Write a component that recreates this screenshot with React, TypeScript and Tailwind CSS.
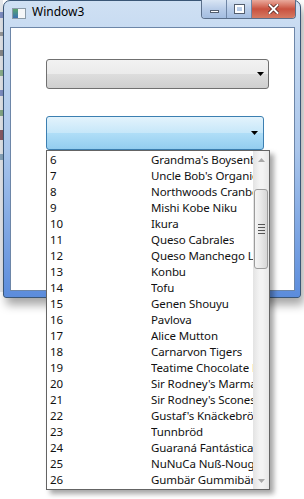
import React from "react";

const items: [number, string][] = [
  [6, "Grandma's Boysenberry Spread"],
  [7, "Uncle Bob's Organic Dried Pears"],
  [8, "Northwoods Cranberry Sauce"],
  [9, "Mishi Kobe Niku"],
  [10, "Ikura"],
  [11, "Queso Cabrales"],
  [12, "Queso Manchego La Pastora"],
  [13, "Konbu"],
  [14, "Tofu"],
  [15, "Genen Shouyu"],
  [16, "Pavlova"],
  [17, "Alice Mutton"],
  [18, "Carnarvon Tigers"],
  [19, "Teatime Chocolate Biscuits"],
  [20, "Sir Rodney's Marmalade"],
  [21, "Sir Rodney's Scones"],
  [22, "Gustaf's Knäckebröd"],
  [23, "Tunnbröd"],
  [24, "Guaraná Fantástica"],
  [25, "NuNuCa Nuß-Nougat-Creme"],
  [26, "Gumbär Gummibärchen"],
];

const Arrow = () => (
  <svg width="7" height="4" viewBox="0 0 7 4">
    <path d="M0 0H7L3.5 4Z" fill="#000" />
  </svg>
);

export default function App() {
  const font = { fontFamily: '"Segoe UI", "Noto Sans", "Open Sans", sans-serif' };
  return (
    <div className="relative w-[304px] h-[499px] bg-white overflow-hidden text-[12px] text-black" style={font}>
      <div className="flex">
        <div className="w-[3px] h-[292px] bg-[#e4e7eb] flex flex-col gap-[14px] pt-[12px] overflow-hidden">
          <div className="h-[6px] bg-[#7f8fc4]" />
          <div className="h-[4px] bg-[#9a9a9a]" />
          <div className="h-[6px] bg-[#8a8a8a]" />
          <div className="h-[6px] bg-[#8db08d]" />
          <div className="h-[6px] bg-[#7f8fc4]" />
          <div className="h-[6px] bg-[#86a886]" />
          <div className="h-[10px] bg-[#8a5a66]" />
          <div className="h-[6px] bg-[#8aa6bd]" />
        </div>
        <div className="w-[298px] h-[298px] rounded-t-[7px] rounded-b-[3px] border border-[#3a5676] bg-gradient-to-b from-[#cfe0f3] via-[#aac6eb] to-[#5b8cdc] shadow-[3px_7px_10px_rgba(0,0,0,0.35)] flex flex-col">
          <div className="h-[26px] flex items-start relative">
            <div className="ml-[8px] mt-[7px] w-[14px] h-[11px] border border-[#8a9aa8] bg-[#f4f6f8] flex">
              <div className="w-[5px] h-full bg-gradient-to-b from-[#5aa36a] to-[#3b6fb0]" />
            </div>
            <div className="ml-[6px] mt-[3px] text-[12px] leading-[16px] text-black">Window3</div>
            <div className="ml-auto mr-[4px] -mt-[1px] flex h-[19px] rounded-b-[4px] border border-[#5b6f8a] border-t-0 overflow-hidden">
              <div className="w-[25px] h-full bg-gradient-to-b from-[#d9e5f4] via-[#b8cce8] to-[#a3bde0] border-r border-[#6e85a5] flex items-center justify-center">
                <div className="w-[9px] h-[3px] mt-[4px] bg-white border border-[#535e6e]" />
              </div>
              <div className="w-[25px] h-full bg-gradient-to-b from-[#d9e5f4] via-[#b8cce8] to-[#a3bde0] border-r border-[#6e85a5] flex items-center justify-center">
                <div className="w-[9px] h-[8px] border-2 border-white outline outline-1 outline-[#535e6e] bg-transparent" />
              </div>
              <div className="w-[43px] h-full bg-gradient-to-b from-[#e9a99c] via-[#c9513f] to-[#d57a62] flex items-center justify-center">
                <svg width="11" height="10" viewBox="0 0 11 10">
                  <path d="M1.5 1L9.5 9M9.5 1L1.5 9" stroke="#4a1a14" strokeWidth="3.4" strokeLinecap="square" />
                  <path d="M1.5 1L9.5 9M9.5 1L1.5 9" stroke="#ffffff" strokeWidth="2" strokeLinecap="square" />
                </svg>
              </div>
            </div>
          </div>
          <div className="ml-[6px] mr-[5px] mb-[6px] flex-1 bg-white border border-[#6d86a8] flex flex-col">
            <div className="ml-[35px] mt-[31px] w-[223px] h-[30px] rounded-[3px] border border-[#707070] bg-[linear-gradient(to_bottom,#f2f2f2_0%,#ebebeb_50%,#dddddd_50%,#cfcfcf_100%)] flex items-center justify-end pr-[4px]">
              <Arrow />
            </div>
            <div className="ml-[35px] mt-[27px] w-[218px] h-[34px] rounded-[3px] border border-[#3c7fb1] bg-[linear-gradient(to_bottom,#e3f3fc_0%,#c6e7f9_50%,#b0def7_50%,#93cdef_100%)] flex items-center justify-end pr-[5px]">
              <Arrow />
            </div>
          </div>
        </div>
      </div>

      <div className="absolute left-[46px] top-[150px] w-[224px] h-[340px] bg-white border border-[#646464] shadow-[4px_4px_5px_rgba(0,0,0,0.35)] flex">
        <div className="flex-1 flex flex-col pt-[1px] overflow-hidden text-[11.5px] tracking-[-0.1px] text-[#111]">
          {items.map(([n, name]) => (
            <div key={n} className="h-[16px] flex items-center leading-[16px] whitespace-nowrap">
              <div className="w-[104px] pl-[3px] shrink-0">{n}</div>
              <div className="overflow-hidden">{name}</div>
            </div>
          ))}
        </div>
        <div className="w-[16px] h-full bg-[linear-gradient(to_right,#e3e3e3,#f3f3f3_40%,#f3f3f3_60%,#e6e6e6)] flex flex-col items-center">
          <div className="h-[17px] flex items-center justify-center">
            <svg width="7" height="4" viewBox="0 0 7 4">
              <path d="M0 4H7L3.5 0Z" fill="#a8a8a8" />
            </svg>
          </div>
          <div className="mt-[21px] w-[14px] h-[80px] rounded-[3px] border border-[#9c9c9c] bg-[linear-gradient(to_right,#f5f5f5,#e8e8e8_50%,#d6d6d6)] flex flex-col items-center justify-center gap-[2px]">
            <div className="w-[7px] h-[1px] bg-[#555]" />
            <div className="w-[7px] h-[1px] bg-[#555]" />
            <div className="w-[7px] h-[1px] bg-[#555]" />
            <div className="w-[7px] h-[1px] bg-[#555]" />
          </div>
          <div className="mt-auto h-[17px] flex items-center justify-center">
            <svg width="7" height="4" viewBox="0 0 7 4">
              <path d="M0 0H7L3.5 4Z" fill="#a8a8a8" />
            </svg>
          </div>
        </div>
      </div>
    </div>
  );
}
